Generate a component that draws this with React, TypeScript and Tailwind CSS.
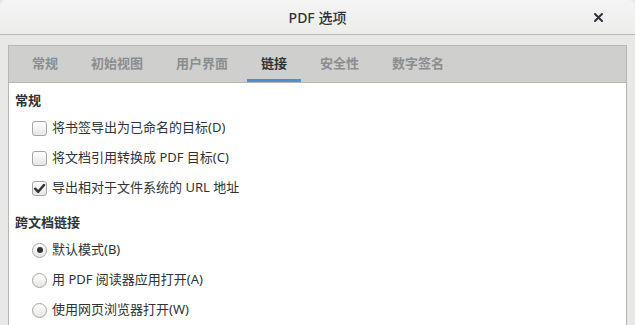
import React from "react";

const tabs = ["常规", "初始视图", "用户界面", "链接", "安全性", "数字签名"];

function Check({ checked, label }: { checked?: boolean; label: string }) {
  return (
    <div className="flex h-[30px] items-center pl-[23px]">
      <div className="flex h-[15px] w-[15px] items-center justify-center rounded-[3px] border border-[#a5a5a2] bg-gradient-to-b from-[#ffffff] to-[#e6e6e4] shadow-[inset_0_1px_0_#ffffff]">
        {checked && (
          <svg width="13" height="13" viewBox="0 0 12 12">
            <path d="M2 6.2 L4.8 9 L10.2 2.8" fill="none" stroke="#2e3436" strokeWidth="2.3" strokeLinecap="round" strokeLinejoin="round" />
          </svg>
        )}
      </div>
      <span className="ml-[5px] text-[13px] text-[#2e3436]">{label}</span>
    </div>
  );
}

function Radio({ checked, label }: { checked?: boolean; label: string }) {
  return (
    <div className="flex h-[30px] items-center pl-[23px]">
      <div className="flex h-[15px] w-[15px] items-center justify-center rounded-full border border-[#a5a5a2] bg-gradient-to-b from-[#ffffff] to-[#e6e6e4]">
        {checked && <div className="h-[6px] w-[6px] rounded-full bg-[#2e3436]" />}
      </div>
      <span className="ml-[5px] text-[13px] text-[#2e3436]">{label}</span>
    </div>
  );
}

export default function App() {
  return (
    <div
      className="flex h-[325px] w-[635px] flex-col overflow-hidden bg-[#e8e8e7]"
      style={{ fontFamily: '"Noto Sans", "Noto Sans CJK SC", sans-serif' }}
    >
      <div className="relative flex h-[35px] shrink-0 items-center justify-center rounded-t-[6px] border-b border-[#b6b6b3] bg-gradient-to-b from-[#f4f4f4] to-[#ededec]">
        <span className="text-[14px] font-medium text-[#2e3436]">PDF 选项</span>
        <svg className="absolute right-[32px] top-[13px]" width="9" height="9" viewBox="0 0 9 9">
          <path d="M1 1 L8 8 M8 1 L1 8" stroke="#2e3436" strokeWidth="2" strokeLinecap="round" />
        </svg>
      </div>
      <div className="flex flex-1 flex-col pl-[8px] pr-[8px] pt-[10px]">
        <div className="flex flex-1 flex-col border border-b-0 border-[#b6b6b3] bg-white">
          <div className="flex h-[37px] shrink-0 items-stretch gap-[5px] border-b border-[#b6b6b3] bg-[#cfcfcd] pl-[9px]">
            {tabs.map((t, i) => (
              <div
                key={t}
                className={
                  i === 3
                    ? "flex items-center border-b-[3px] border-[#4a90d9] px-[14px] pt-[3px] text-[13px] font-bold text-[#2e3436]"
                    : "flex items-center px-[14px] text-[13px] font-bold text-[#8b8e8f]"
                }
              >
                {t}
              </div>
            ))}
          </div>
          <div className="flex flex-col pt-[8px]">
            <div className="flex h-[20px] items-center pl-[6px] text-[13px] font-bold text-[#2e3436]">常规</div>
            <div className="mt-[2px] flex flex-col">
              <Check label="将书签导出为已命名的目标(D)" />
              <Check label="将文档引用转换成 PDF 目标(C)" />
              <Check checked label="导出相对于文件系统的 URL 地址" />
            </div>
            <div className="mt-[10px] flex h-[20px] items-center pl-[6px] text-[13px] font-bold text-[#2e3436]">跨文档链接</div>
            <div className="mt-[2px] flex flex-col">
              <Radio checked label="默认模式(B)" />
              <Radio label="用 PDF 阅读器应用打开(A)" />
              <Radio label="使用网页浏览器打开(W)" />
            </div>
          </div>
        </div>
      </div>
    </div>
  );
}
